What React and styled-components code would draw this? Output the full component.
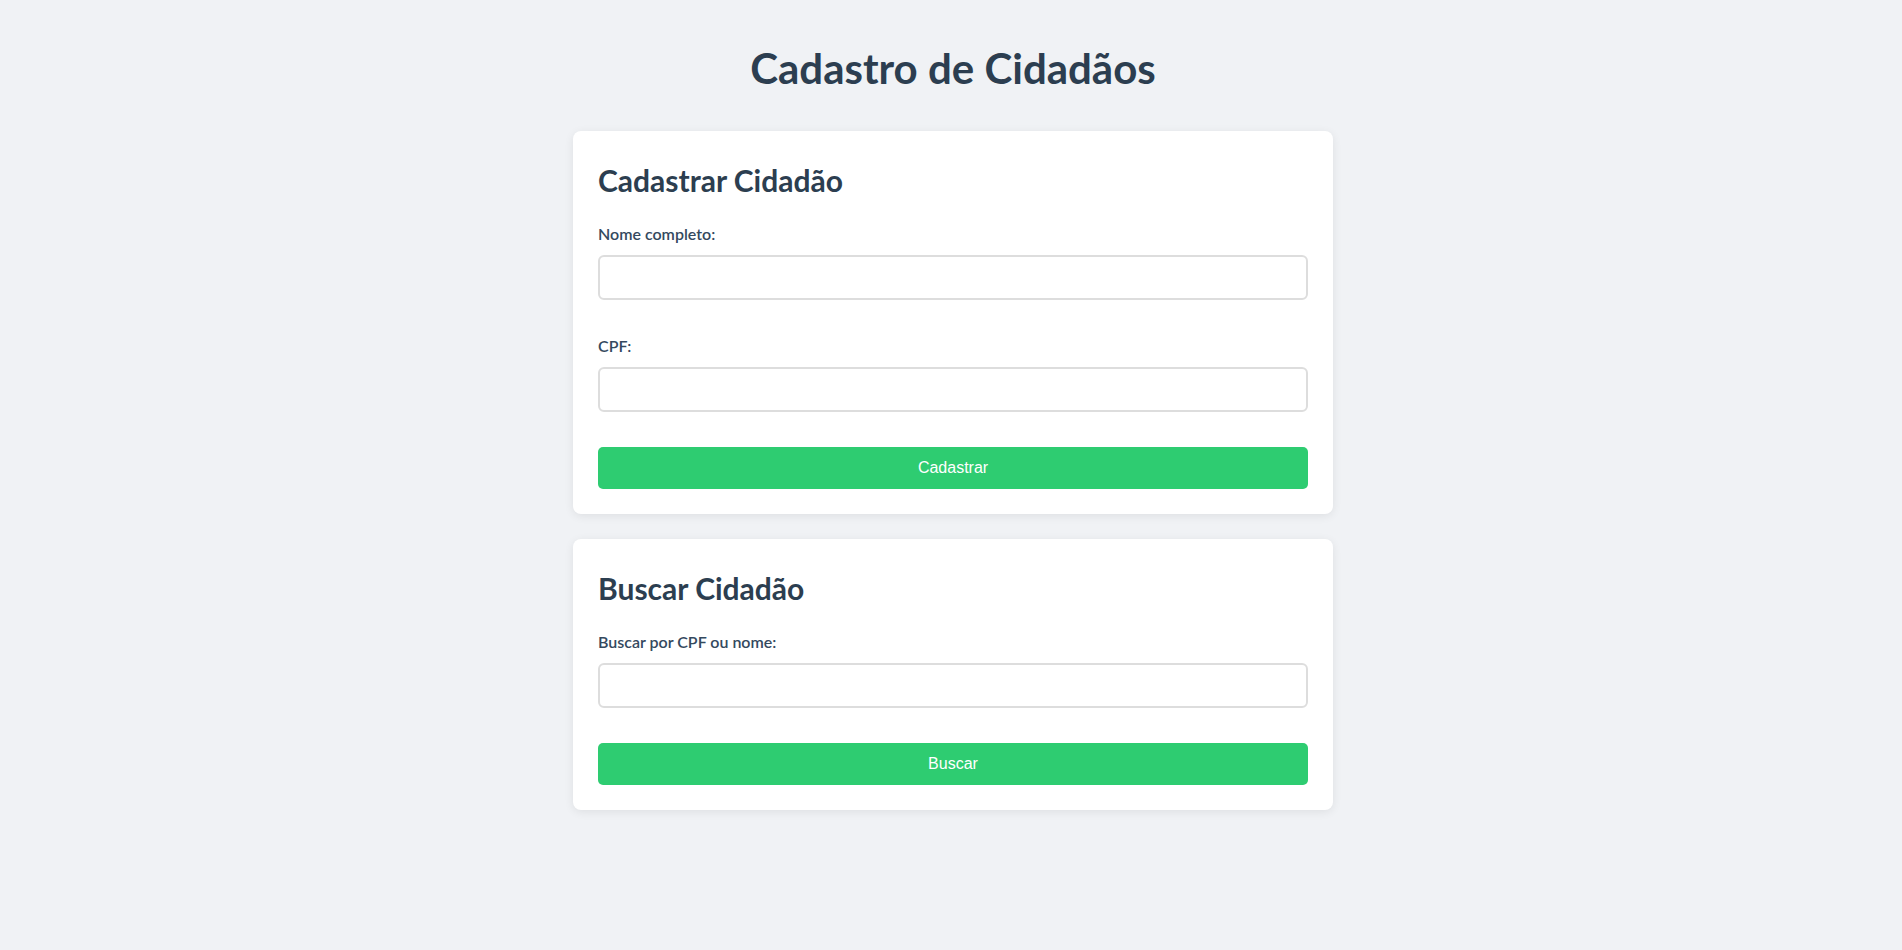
import React from 'react';
import styled, { createGlobalStyle } from 'styled-components';

const GlobalStyle = createGlobalStyle`
  * {
    box-sizing: border-box;
  }

  body {
    margin: 0;
    background: #f0f2f5;
    font-family: Lato, "Open Sans", sans-serif;
    color: #2c3e50;
  }
`;

const Page = styled.div`
  min-height: 100vh;
  padding: 43px 20px 40px 24px;
`;

const Container = styled.div`
  max-width: 760px;
  margin: 0 auto;
`;

const Title = styled.h1`
  margin: 0 0 38px;
  text-align: center;
  font-size: 42px;
  line-height: 1.2;
  font-weight: 700;
  color: #2c3e50;
`;

const Card = styled.section`
  background: #ffffff;
  border-radius: 8px;
  padding: 31px 25px 25px;
  margin-bottom: 25px;
  box-shadow: 0 2px 10px rgba(0, 0, 0, 0.08);
`;

const CardTitle = styled.h2`
  margin: 0 0 25px;
  font-size: 30px;
  line-height: 36px;
  font-weight: 700;
  color: #2c3e50;
`;

const FieldGroup = styled.div`
  margin-bottom: 35px;
`;

const Label = styled.label`
  display: block;
  margin: 0 0 10px;
  font-size: 16px;
  line-height: 22px;
  font-weight: 600;
  color: #34495e;
`;

const Input = styled.input`
  display: block;
  width: 100%;
  height: 45px;
  padding: 10px 12px;
  border: 2px solid #dddddd;
  border-radius: 6px;
  font-size: 16px;
  font-family: "Liberation Sans", Arial, sans-serif;
  color: #2c3e50;
  outline: none;

  &:focus {
    border-color: #2ecc71;
  }
`;

const Button = styled.button`
  display: block;
  width: 100%;
  height: 42px;
  border: none;
  border-radius: 5px;
  background: #2ecc71;
  color: #ffffff;
  font-family: "Liberation Sans", Arial, sans-serif;
  font-size: 16px;
  cursor: pointer;

  &:hover {
    background: #27ae60;
  }
`;

const Field = ({ id, label }) => (
  <FieldGroup>
    <Label htmlFor={id}>{label}</Label>
    <Input id={id} type="text" />
  </FieldGroup>
);

const App = () => {
  return (
    <>
      <GlobalStyle />
      <Page>
        <Container>
          <Title>Cadastro de Cidadãos</Title>

          <Card>
            <CardTitle>Cadastrar Cidadão</CardTitle>
            <Field id="nome" label="Nome completo:" />
            <Field id="cpf" label="CPF:" />
            <Button type="button">Cadastrar</Button>
          </Card>

          <Card>
            <CardTitle>Buscar Cidadão</CardTitle>
            <Field id="busca" label="Buscar por CPF ou nome:" />
            <Button type="button">Buscar</Button>
          </Card>
        </Container>
      </Page>
    </>
  );
};

export default App;
